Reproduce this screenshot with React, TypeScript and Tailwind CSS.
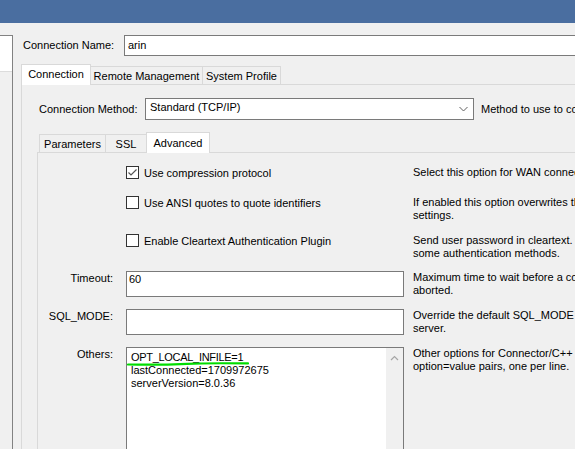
// MySQL Workbench style "Manage Server Connections" dialog, Advanced tab.

const EDGE = 'border-[#d9d9d9]';

function OuterTab({ label, width, active }: { label: string; width: string; active?: boolean }) {
  if (active) {
    return (
      <div
        className={`relative z-10 -mb-px flex h-[21px] ${width} items-start justify-center border border-b-0 ${EDGE} bg-white pt-[3px]`}
      >
        {label}
      </div>
    );
  }
  return (
    <div className={`flex h-[18px] ${width} items-center justify-center border-r border-t ${EDGE} bg-[#f0f0f0] pt-[2px]`}>
      {label}
    </div>
  );
}

function CheckBox({ checked }: { checked?: boolean }) {
  return (
    <span className="flex h-[13px] w-[13px] shrink-0 items-center justify-center border border-[#333] bg-white">
      {checked ? (
        <svg width="11" height="11" viewBox="0 0 11 11">
          <path d="M1.5 5.5 L4 8 L9.5 2.5" fill="none" stroke="#555" strokeWidth="1.2" />
        </svg>
      ) : null}
    </span>
  );
}

function Row({
  height,
  label,
  desc,
  children,
}: {
  height: string;
  label?: string;
  desc: React.ReactNode;
  children: React.ReactNode;
}) {
  return (
    <div className={`flex ${height} items-start`}>
      <div className="w-[88px] shrink-0 pr-[13px] pt-px text-right">{label}</div>
      <div className="w-[278px] shrink-0">{children}</div>
      <div className="ml-[9px] whitespace-nowrap">{desc}</div>
    </div>
  );
}

function CheckRow({ height, label, checked, desc }: { height: string; label: string; checked?: boolean; desc: React.ReactNode }) {
  return (
    <Row height={height} desc={desc}>
      <div className="flex items-start">
        <CheckBox checked={checked} />
        <span className="ml-[5px] whitespace-nowrap pt-px">{label}</span>
      </div>
    </Row>
  );
}

export default function App() {
  return (
    <div className="h-[449px] w-[575px] overflow-hidden bg-[#f0f0f0] font-['Liberation_Sans',Arial,sans-serif] text-[11px] leading-[13px] text-black">
      <div className="h-[23px] bg-[#4a6ea0]" />

      <div className="flex pt-[12px]">
        {/* connection list on the left, mostly off screen */}
        <aside className="h-[414px] w-[13px] shrink-0 border-r border-t border-[#828282]">
          <div className="h-[36px] border-b border-[#dcdcdc] bg-white" />
        </aside>

        <main className="ml-[8px] min-w-0 flex-1">
          <div className="flex h-[21px] items-center">
            <span className="w-[103px] shrink-0 pl-[2px]">Connection Name:</span>
            <div className="flex h-[21px] w-[460px] shrink-0 items-center border border-[#7a7a7a] bg-white pl-[3px]">
              arin
            </div>
          </div>

          {/* outer tabs */}
          <div className="mt-[8px] flex h-[20px] items-end">
            <OuterTab label="Connection" width="w-[70px]" active />
            <OuterTab label="Remote Management" width="w-[112px]" />
            <OuterTab label="System Profile" width="w-[78px]" />
          </div>

          <div className={`h-[400px] border-l border-t ${EDGE} pl-[3px]`}>
            <div className="pl-[12px] pt-[13px]">
              <div className="flex h-[22px] items-center pl-[2px]">
                <span className="w-[106px] shrink-0">Connection Method:</span>
                <div className="flex h-[22px] w-[329px] shrink-0 items-center justify-between border border-[#7a7a7a] bg-white pl-[4px] pr-[5px]">
                  <span className="-mt-[3px]">Standard (TCP/IP)</span>
                  <svg width="9" height="6" viewBox="0 0 9 6">
                    <path d="M0.5 1 L4.5 5 L8.5 1" fill="none" stroke="#606060" strokeWidth="1" />
                  </svg>
                </div>
                <span className="ml-[7px] whitespace-nowrap">Method to use to connect to the RDBMS</span>
              </div>

              {/* inner tabs */}
              <div className="mt-[12px] flex h-[20px] items-end pl-[2px]">
                <div className={`flex h-[18px] w-[67px] items-center justify-center border border-b-0 ${EDGE} pt-[2px]`}>
                  Parameters
                </div>
                <div className={`flex h-[18px] w-[41px] items-center justify-center border-r border-t ${EDGE} pt-[2px]`}>
                  SSL
                </div>
                <div
                  className={`relative z-10 -mb-px -ml-px flex h-[21px] w-[64px] items-start justify-center border border-b-0 ${EDGE} bg-white pt-[4px]`}
                >
                  Advanced
                </div>
              </div>

              <div className={`h-[300px] border-l border-t ${EDGE} pt-[13px]`}>
                <CheckRow height="h-[30px]" label="Use compression protocol" checked desc="Select this option for WAN connections." />
                <CheckRow
                  height="h-[38px]"
                  label="Use ANSI quotes to quote identifiers"
                  desc={
                    <>
                      If enabled this option overwrites the serverside
                      <br />
                      settings.
                    </>
                  }
                />
                <CheckRow
                  height="h-[37px]"
                  label="Enable Cleartext Authentication Plugin"
                  desc={
                    <>
                      Send user password in cleartext. Required for
                      <br />
                      some authentication methods.
                    </>
                  }
                />
                <Row
                  height="h-[38px]"
                  label="Timeout:"
                  desc={
                    <>
                      Maximum time to wait before a connection is
                      <br />
                      aborted.
                    </>
                  }
                >
                  <div className="h-[26px] border border-[#7a7a7a] bg-white pl-[2px] pt-px">60</div>
                </Row>
                <Row
                  height="h-[38px]"
                  label="SQL_MODE:"
                  desc={
                    <>
                      Override the default SQL_MODE used by the
                      <br />
                      server.
                    </>
                  }
                >
                  <div className="h-[26px] border border-[#7a7a7a] bg-white" />
                </Row>
                <Row
                  height="h-[120px]"
                  label="Others:"
                  desc={
                    <>
                      Other options for Connector/C++ as
                      <br />
                      option=value pairs, one per line.
                    </>
                  }
                >
                  <div className="relative h-[110px] border border-[#7a7a7a] bg-white pl-[4px] pt-[3px]">
                    <div className="tracking-[-0.3px]">OPT_LOCAL_INFILE=1</div>
                    <div>lastConnected=1709972675</div>
                    <div>serverVersion=8.0.36</div>
                    <div className="absolute bottom-0 right-0 top-0 flex w-[17px] justify-center bg-[#f0f0f0] pt-[7px]">
                      <svg width="9" height="6" viewBox="0 0 9 6">
                        <path d="M1 5 L4.5 1.5 L8 5" fill="none" stroke="#a6a6a6" strokeWidth="1.2" />
                      </svg>
                    </div>
                    {/* hand-drawn highlight under the first option */}
                    <svg className="absolute left-0 top-0" width="130" height="24" viewBox="0 0 130 24">
                      <path
                        d="M1 16.5 C 25 17, 45 16.5, 60 15.8 S 100 15.2, 121 15.4"
                        fill="none"
                        stroke="#00dd00"
                        strokeWidth="2.2"
                        strokeLinecap="round"
                      />
                    </svg>
                  </div>
                </Row>
              </div>
            </div>
          </div>
        </main>
      </div>
    </div>
  );
}
